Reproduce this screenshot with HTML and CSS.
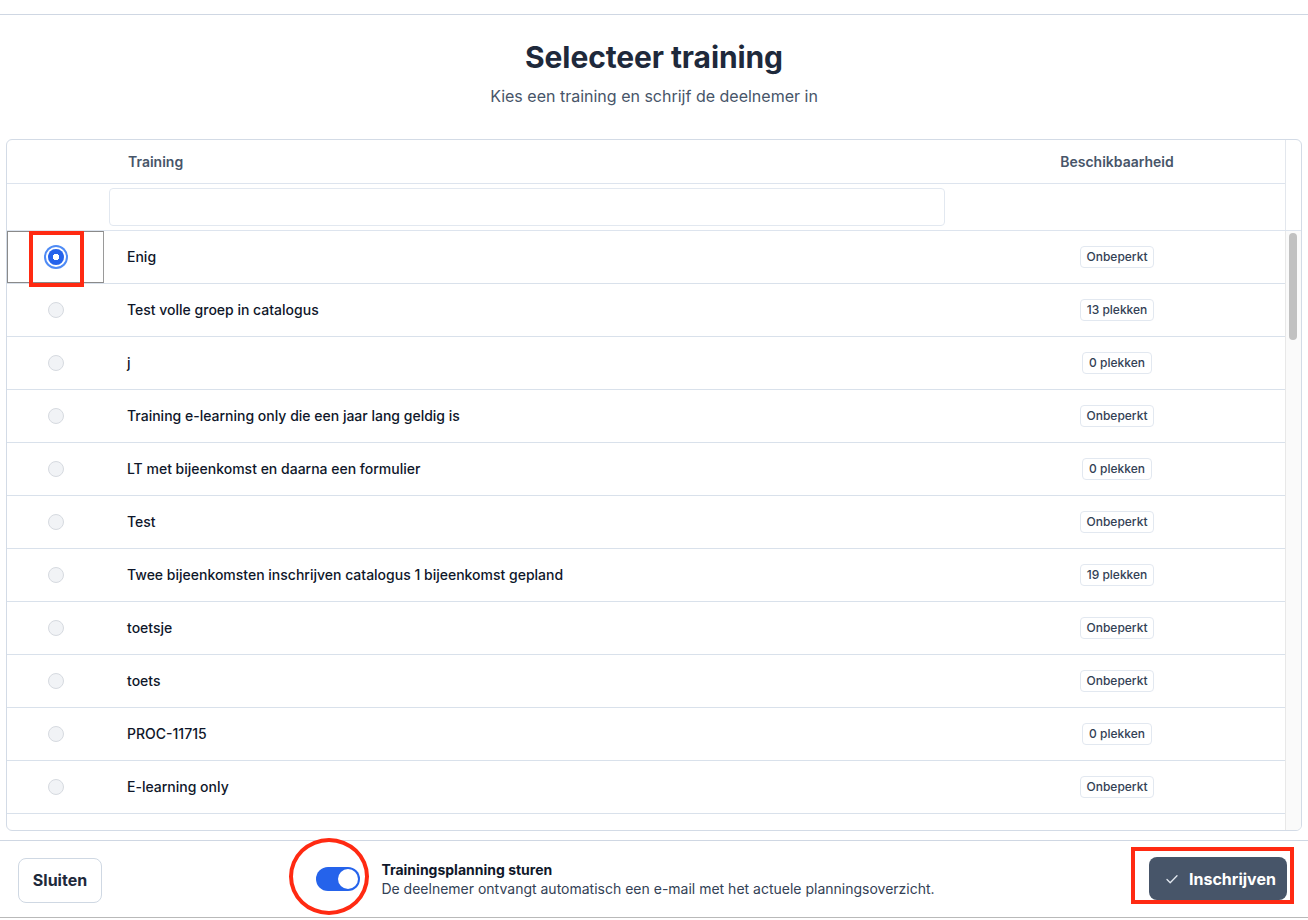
FILE: index.html
```html
<!DOCTYPE html>
<html lang="nl">
<head>
  <meta charset="UTF-8">
  <meta name="viewport" content="width=device-width, initial-scale=1.0">
  <title>Selecteer training</title>
  <link rel="stylesheet" href="styles.css">
</head>
<body>
  <div class="modal">
    <div class="topbar"></div>

    <!-- Kop -->
    <div class="head">
      <h1 class="title">Selecteer training</h1>
      <p class="subtitle">Kies een training en schrijf de deelnemer in</p>
    </div>

    <!-- Tabel met trainingen -->
    <div class="panel">
      <div class="panel-head">
        <div class="head-cols">
          <div class="row head-row">
            <div class="col-sel"></div>
            <div class="col-name">Training</div>
            <div class="col-avail">Beschikbaarheid</div>
          </div>
          <div class="row filter-row">
            <div class="col-sel"></div>
            <div class="col-name"><input class="filter" type="text"></div>
            <div class="col-avail"></div>
          </div>
        </div>
        <div class="gutter"></div>
      </div>

      <div class="panel-body">
        <div class="rows">
          <div class="row item">
            <div class="col-sel focused"><span class="radio checked"></span></div>
            <div class="col-name">Enig</div>
            <div class="col-avail"><span class="badge">Onbeperkt</span></div>
          </div>
          <div class="row item">
            <div class="col-sel"><span class="radio"></span></div>
            <div class="col-name">Test volle groep in catalogus</div>
            <div class="col-avail"><span class="badge">13 plekken</span></div>
          </div>
          <div class="row item">
            <div class="col-sel"><span class="radio"></span></div>
            <div class="col-name">j</div>
            <div class="col-avail"><span class="badge">0 plekken</span></div>
          </div>
          <div class="row item">
            <div class="col-sel"><span class="radio"></span></div>
            <div class="col-name">Training e-learning only die een jaar lang geldig is</div>
            <div class="col-avail"><span class="badge">Onbeperkt</span></div>
          </div>
          <div class="row item">
            <div class="col-sel"><span class="radio"></span></div>
            <div class="col-name">LT met bijeenkomst en daarna een formulier</div>
            <div class="col-avail"><span class="badge">0 plekken</span></div>
          </div>
          <div class="row item">
            <div class="col-sel"><span class="radio"></span></div>
            <div class="col-name">Test</div>
            <div class="col-avail"><span class="badge">Onbeperkt</span></div>
          </div>
          <div class="row item">
            <div class="col-sel"><span class="radio"></span></div>
            <div class="col-name">Twee bijeenkomsten inschrijven catalogus 1 bijeenkomst gepland</div>
            <div class="col-avail"><span class="badge">19 plekken</span></div>
          </div>
          <div class="row item">
            <div class="col-sel"><span class="radio"></span></div>
            <div class="col-name">toetsje</div>
            <div class="col-avail"><span class="badge">Onbeperkt</span></div>
          </div>
          <div class="row item">
            <div class="col-sel"><span class="radio"></span></div>
            <div class="col-name">toets</div>
            <div class="col-avail"><span class="badge">Onbeperkt</span></div>
          </div>
          <div class="row item">
            <div class="col-sel"><span class="radio"></span></div>
            <div class="col-name">PROC-11715</div>
            <div class="col-avail"><span class="badge">0 plekken</span></div>
          </div>
          <div class="row item">
            <div class="col-sel"><span class="radio"></span></div>
            <div class="col-name">E-learning only</div>
            <div class="col-avail"><span class="badge">Onbeperkt</span></div>
          </div>
          <div class="row item">
            <div class="col-sel"></div>
            <div class="col-name"></div>
            <div class="col-avail"><span class="badge badge-empty"></span></div>
          </div>
        </div>
        <div class="scrollbar"><div class="thumb"></div></div>
      </div>

      <!-- Markering rond de geselecteerde radio -->
      <div class="mark mark-radio"></div>
    </div>

    <!-- Voettekst -->
    <div class="footer">
      <button class="btn btn-light">Sluiten</button>

      <div class="notify">
        <div class="toggle-wrap">
          <span class="toggle"><span class="knob"></span></span>
          <span class="mark mark-circle"></span>
        </div>
        <div class="notify-text">
          <div class="notify-title">Trainingsplanning sturen</div>
          <div class="notify-desc">De deelnemer ontvangt automatisch een e-mail met het actuele planningsoverzicht.</div>
        </div>
      </div>

      <div class="submit-wrap">
        <button class="btn btn-dark">
          <svg width="14" height="14" viewBox="0 0 14 14" fill="none" stroke="currentColor" stroke-width="1.3" stroke-linecap="round" stroke-linejoin="round"><path d="M2 7.5l3.2 3.2L12 3.8"/></svg>
          Inschrijven
        </button>
        <span class="mark mark-submit"></span>
      </div>
    </div>
  </div>
</body>
</html>
```

FILE: styles.css
```css
/* Algemeen */
body {
  margin: 0;
  font-family: Inter, "Noto Sans", sans-serif;
  background: #ffffff;
  color: #0f172a;
}

.modal {
  width: 1308px;
  height: 918px;
  border-bottom: 1px solid #b9b9b9;
  box-sizing: border-box;
}

.topbar {
  height: 14px;
  border-bottom: 1px solid #cfd7e3;
}

/* Kop */
.head {
  padding: 24px 0 31px;
  text-align: center;
}

.title {
  margin: 0;
  font-size: 30px;
  line-height: 36px;
  font-weight: 700;
  color: #1e293b;
  letter-spacing: -0.1px;
}

.subtitle {
  margin: 9px 0 0;
  font-size: 16px;
  line-height: 24px;
  color: #475569;
}

/* Tabel */
.panel {
  position: relative;
  margin: 0 6px;
  height: 692px;
  border: 1px solid #d3dbe6;
  border-radius: 6px;
  box-sizing: border-box;
  display: flex;
  flex-direction: column;
  overflow: hidden;
}

.panel-head {
  display: flex;
  border-bottom: 1px solid #dde4ee;
}

.head-cols {
  flex: 1;
}

.gutter {
  width: 15px;
  border-left: 1px solid #e3e7ed;
}

.row {
  display: flex;
  align-items: center;
}

.col-sel {
  width: 97px;
  flex-shrink: 0;
  align-self: stretch;
  display: flex;
  justify-content: center;
  align-items: center;
  box-sizing: border-box;
}

.col-name {
  width: 845px;
  flex-shrink: 0;
  padding-left: 23px;
  padding-bottom: 1px;
  box-sizing: border-box;
  font-size: 14px;
  font-weight: 500;
  color: #0f172a;
}

.col-avail {
  flex: 1;
  text-align: center;
}

.head-row {
  height: 43px;
  border-bottom: 1px solid #dde4ee;
}

.head-row .col-name,
.head-row .col-avail {
  font-size: 14px;
  font-weight: 600;
  color: #475569;
}

.head-row .col-name {
  padding-left: 24px;
}

.filter-row {
  height: 46px;
}

.filter-row .col-name {
  padding-left: 5px;
}

.filter {
  display: block;
  width: 836px;
  height: 38px;
  margin: 0;
  border: 1px solid #e2e8f0;
  border-radius: 4px;
  box-sizing: border-box;
  font-family: inherit;
  outline: none;
}

.panel-body {
  flex: 1;
  display: flex;
  min-height: 0;
}

.rows {
  flex: 1;
  overflow: hidden;
}

.item {
  height: 53px;
  border-bottom: 1px solid #d9e1eb;
  box-sizing: border-box;
}

.focused {
  border: 1px solid #8a8a8a;
  border-right-color: #9a9a9a;
}

/* Radio */
.radio {
  width: 16px;
  height: 16px;
  border-radius: 50%;
  border: 1px solid #d6dae0;
  background: #f1f3f6;
  box-sizing: border-box;
}

.radio.checked {
  border: none;
  background: radial-gradient(circle, #ffffff 0 3px, #2563eb 3.5px);
  box-shadow: 0 0 0 2px #ffffff, 0 0 0 4px #4f8bf5;
}

/* Badge */
.badge {
  display: inline-block;
  padding: 2px 6px;
  border: 1px solid #e2e8f0;
  border-radius: 4px;
  font-size: 12px;
  line-height: 16px;
  font-weight: 500;
  color: #334155;
  vertical-align: middle;
}

.badge-empty {
  width: 67px;
  height: 20px;
  padding: 0;
  box-sizing: border-box;
}

/* Scrollbalk */
.scrollbar {
  width: 15px;
  border-left: 1px solid #e8e8e8;
  background: #fafafa;
  padding-top: 2px;
}

.thumb {
  width: 8px;
  height: 107px;
  margin-left: 3px;
  border-radius: 4px;
  background: #c1c1c1;
}

/* Rode markeringen */
.mark {
  position: absolute;
  box-sizing: border-box;
  pointer-events: none;
}

.mark-radio {
  left: 22px;
  top: 91px;
  width: 55px;
  height: 56px;
  border: 4px solid #ff2a12;
}

/* Voettekst */
.footer {
  margin-top: 9px;
  height: 77px;
  border-top: 1px solid #cfd7e3;
  box-sizing: border-box;
  display: flex;
  align-items: center;
  justify-content: space-between;
  padding: 0 21px 0 18px;
}

.btn {
  font-family: inherit;
  font-size: 16px;
  font-weight: 700;
  border-radius: 8px;
  cursor: pointer;
}

.btn-light {
  width: 84px;
  height: 45px;
  margin-top: 2px;
  background: #ffffff;
  border: 1px solid #cfd8e3;
  color: #1e293b;
}

.notify {
  display: flex;
  align-items: center;
  gap: 21px;
}

.toggle-wrap {
  position: relative;
  display: flex;
}

.toggle {
  width: 44px;
  height: 24px;
  border-radius: 12px;
  background: #2563eb;
  display: flex;
  align-items: center;
  justify-content: flex-end;
  padding: 2px;
  box-sizing: border-box;
}

.knob {
  width: 20px;
  height: 20px;
  border-radius: 50%;
  background: #ffffff;
}

.mark-circle {
  left: -27px;
  top: -29px;
  width: 80px;
  height: 77px;
  border: 4px solid #ff2a12;
  border-radius: 50%;
}

.notify-title {
  font-size: 14px;
  line-height: 19px;
  font-weight: 700;
  color: #0f172a;
}

.notify-desc {
  font-size: 14px;
  line-height: 19px;
  color: #334155;
}

.submit-wrap {
  position: relative;
  margin-top: -1px;
}

.btn-dark {
  display: flex;
  align-items: center;
  gap: 10px;
  width: 138px;
  height: 43px;
  padding: 0 0 0 16px;
  border: none;
  background: #475569;
  color: #ffffff;
}

.btn-dark svg {
  color: #e2e8f0;
}

.mark-submit {
  left: -18px;
  top: -10px;
  width: 163px;
  height: 57px;
  border: 4px solid #ff2a12;
}
```
